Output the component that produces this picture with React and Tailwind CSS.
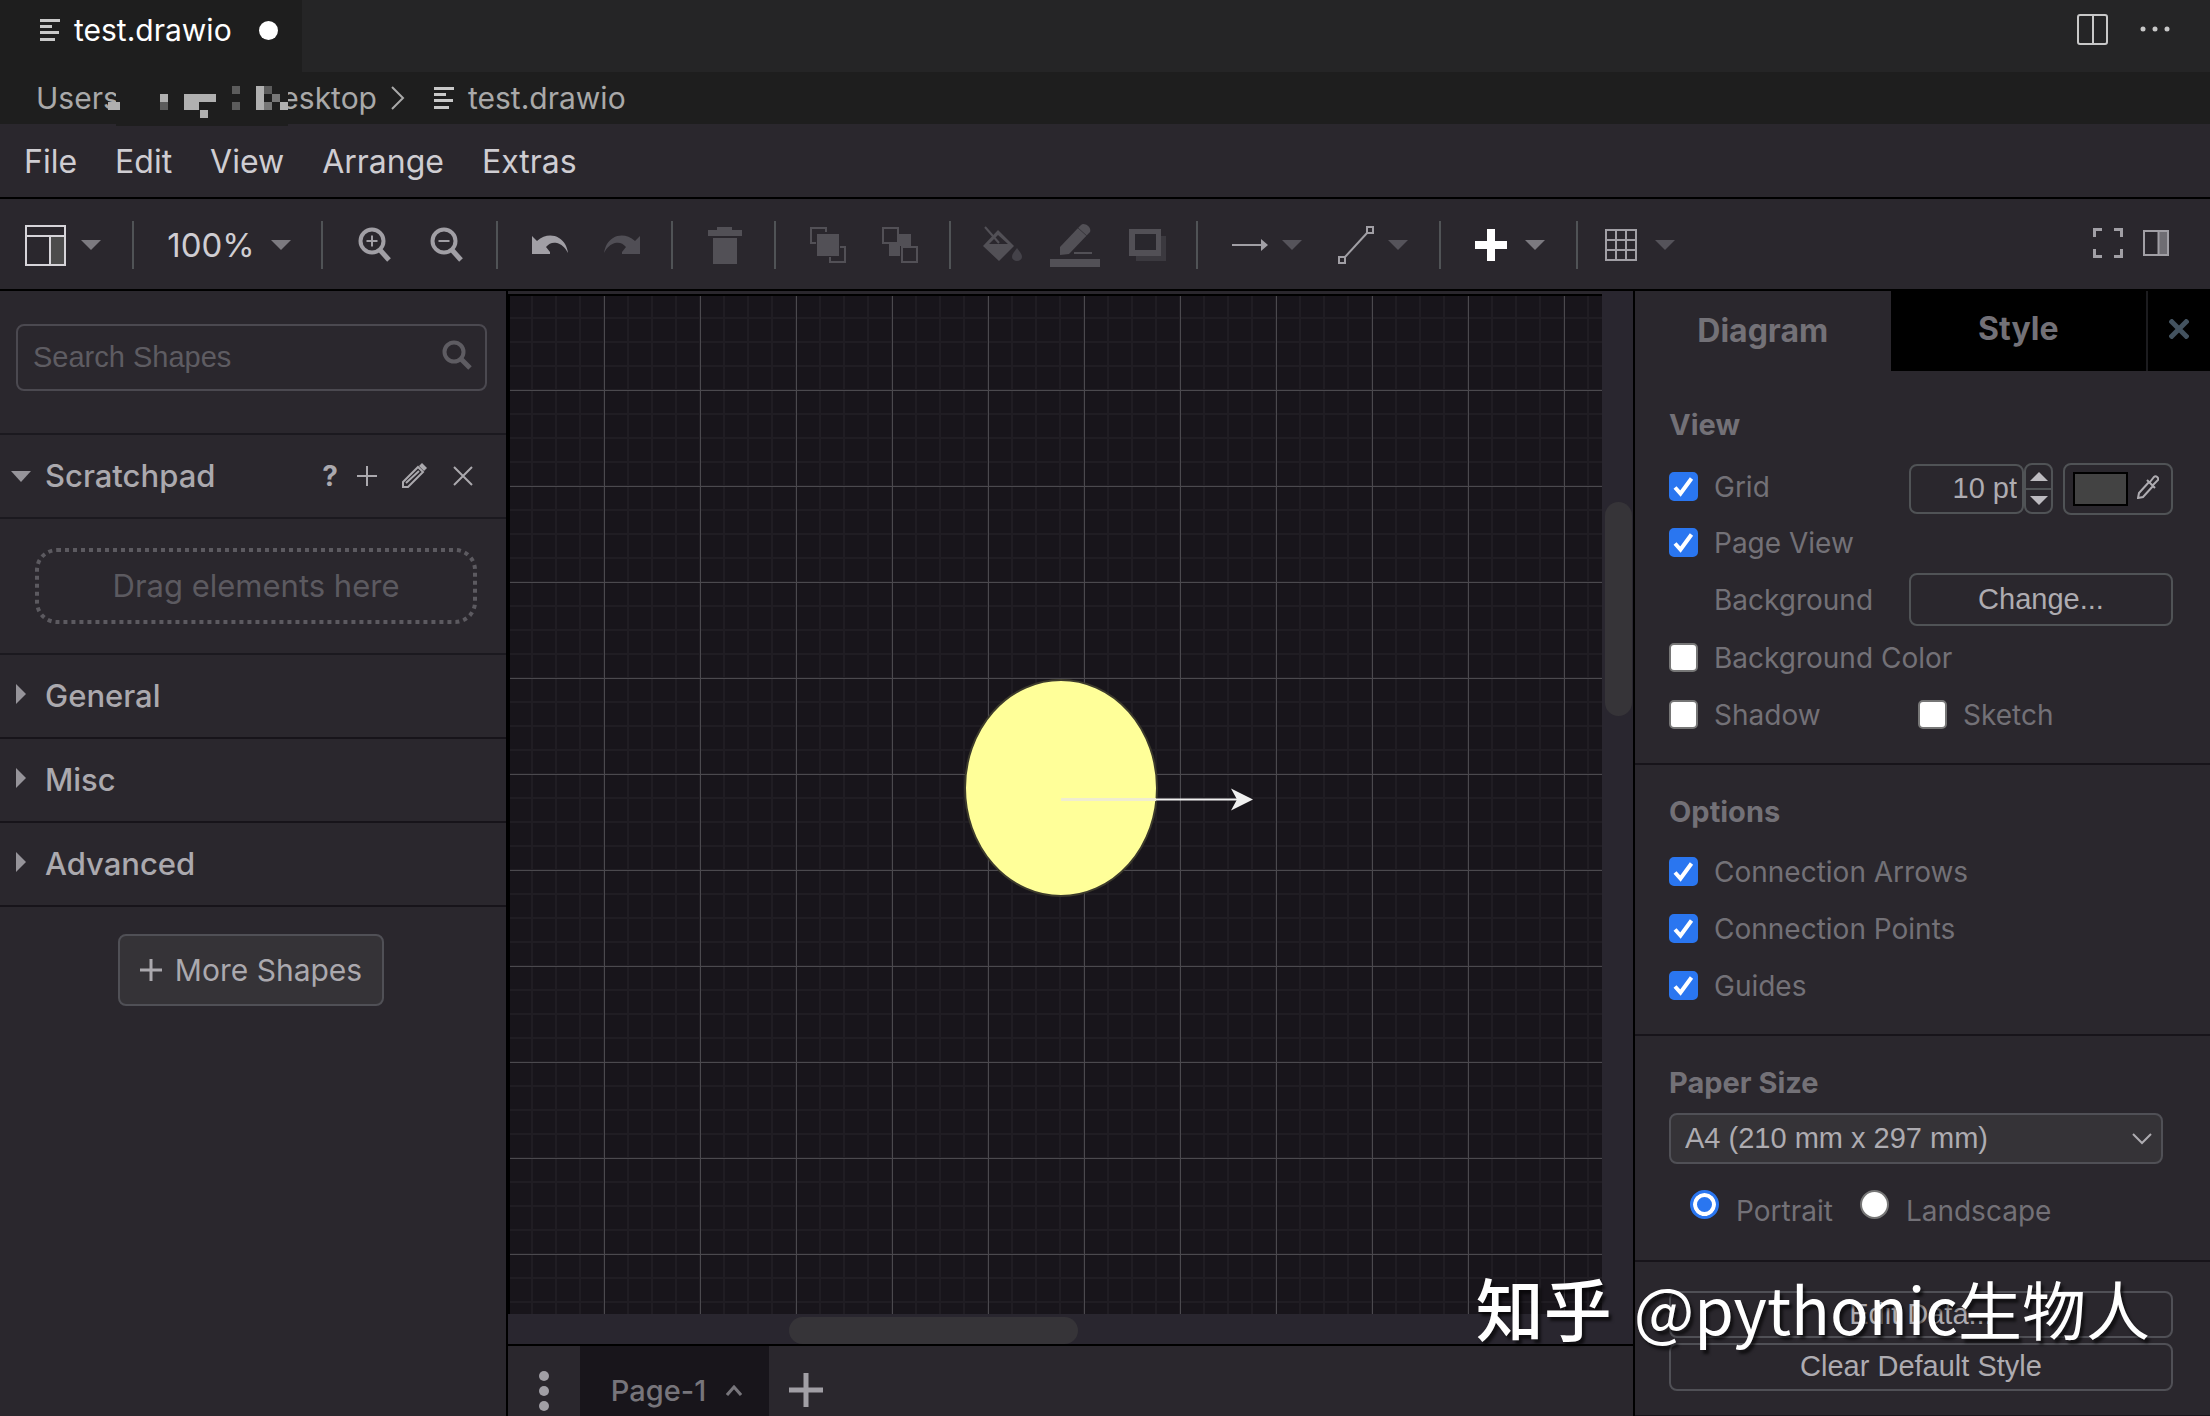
import React, { useState } from 'react'

const FileLines = ({ className = '' }) => (
  <svg width="20" height="22" viewBox="0 0 20 22" fill="currentColor" className={`shrink-0 ${className}`}>
    <rect x="0" y="0" width="20" height="3" />
    <rect x="0" y="6" width="12" height="3" />
    <rect x="0" y="12" width="19" height="3" />
    <rect x="0" y="19" width="15" height="3" />
  </svg>
)

const Caret = ({ dim }) => (
  <svg width="20" height="10" viewBox="0 0 20 10" className={dim ? 'text-[#55535a]' : 'text-[#7c7a80]'}>
    <path d="M0 0h20L10 10z" fill="currentColor" />
  </svg>
)

const Separator = () => <div className="ml-[13px] mr-4 h-12 w-[2px] shrink-0 bg-[#505356]" />

const ToolButton = ({ label, children, wide }) => (
  <button
    type="button"
    aria-label={label}
    className={`flex h-full shrink-0 items-center justify-center gap-[14px] ${wide ? 'w-[106px]' : 'w-[72px]'}`}
  >
    {children}
  </button>
)

const Check = ({ id, label, defaultChecked }) => (
  <div className="flex items-center gap-4">
    <span className="relative block size-[29px]">
      <input
        id={id}
        type="checkbox"
        defaultChecked={defaultChecked}
        className="peer block size-[29px] appearance-none rounded-[5px] border-2 border-[#767676] bg-white checked:border-[#2a76f0] checked:bg-[#2a76f0]"
      />
      <svg
        viewBox="0 0 29 29"
        className="pointer-events-none absolute inset-0 hidden size-[29px] text-white peer-checked:block"
      >
        <path d="M6 15.500l5.500 6L22.500 6.500" fill="none" stroke="currentColor" strokeWidth="4" />
      </svg>
    </span>
    <label htmlFor={id}>{label}</label>
  </div>
)

const Radio = ({ id, label, defaultChecked }) => (
  <div className="flex items-start gap-[17px]">
    <input
      id={id}
      type="radio"
      name="orientation"
      defaultChecked={defaultChecked}
      className="size-[29px] appearance-none rounded-full border-2 border-[#767676] bg-white checked:border-[3px] checked:border-[#2a76f0] checked:bg-[#2a76f0] checked:shadow-[inset_0_0_0_4px_#ffffff]"
    />
    <label htmlFor={id} className="mt-1 leading-[34px]">
      {label}
    </label>
  </div>
)

const Heading = ({ children }) => (
  <h2 className="h-10 text-[29px] font-bold leading-10 text-[#737177]">{children}</h2>
)

const TabBar = () => (
  <header className="flex h-[72px] shrink-0 bg-[#252526]">
    <div className="flex w-[302px] items-center bg-[#1e1e1e] pb-3 pl-10">
      <FileLines className="text-[#c8c8c8]" />
      <span className="ml-[14px] text-[30px] text-white">test.drawio</span>
      <span className="ml-[27px] size-[19px] rounded-full bg-white" />
    </div>
    <div className="ml-auto flex items-center gap-8 pb-[14px] pr-10 text-[#c8c8c8]">
      <button type="button" aria-label="Split editor">
        <svg width="31" height="31" viewBox="0 0 31 31" fill="none" stroke="currentColor" strokeWidth="2">
          <rect x="1" y="1" width="29" height="29" rx="2" />
          <path d="M16 1v29" />
        </svg>
      </button>
      <button type="button" aria-label="More actions">
        <svg width="30" height="6" viewBox="0 0 30 6" fill="currentColor">
          <circle cx="3" cy="3" r="2.500" />
          <circle cx="15" cy="3" r="2.500" />
          <circle cx="27" cy="3" r="2.500" />
        </svg>
      </button>
    </div>
  </header>
)

const Breadcrumb = () => (
  <nav className="relative flex h-[52px] shrink-0 items-center bg-[#1e1e1e] pl-9 text-[30px] text-[#a9a9a9]">
    <div className="flex w-[341px] justify-between">
      <a href="#users">Users</a>
      <a href="#desktop">Desktop</a>
    </div>
    <svg width="14" height="24" viewBox="0 0 14 24" fill="none" stroke="currentColor" strokeWidth="2" className="ml-[14px]">
      <path d="M1 1l11 11L1 23" />
    </svg>
    <FileLines className="ml-[29px] text-[#c8c8c8]" />
    <a href="#file" className="ml-[14px]">
      test.drawio
    </a>
    {/* redacted folder names */}
    <svg width="180" height="56" viewBox="108 72 180 56" className="absolute left-[108px] top-0 z-10">
      <path d="M116 72h172v54H116z" fill="#1e1e1e" />
      <path d="M108 102h12v12h-12z" fill="#1e1e1e" />
      <path d="M108 102h12v8h-12zM160 94h8v8h-8zM184 94h32v8h-17v8h-15zM200 110h8v8h-8zM256 86h8v24h-8zM280 102h8v8h-8z" fill="#b0b0b0" />
      <path d="M160 102h8v8h-8zM232 86h8v8h-8zM232 102h8v8h-8zM264 86h8v8h-8z" fill="#5c5c5c" />
      <path d="M264 102h8v8h-8zM272 94h8v8h-8z" fill="#777777" />
    </svg>
  </nav>
)

const MenuBar = () => (
  <nav className="flex h-[75px] shrink-0 items-center gap-[38px] border-b-2 border-black pl-6 pt-[3px] text-[32px] text-[#cfcdd2]">
    {['File', 'Edit', 'View', 'Arrange', 'Extras'].map((item) => (
      <button key={item} type="button">
        {item}
      </button>
    ))}
  </nav>
)

const Toolbar = () => (
  <div className="flex h-[92px] shrink-0 items-center border-b-2 border-black pl-[7px] pt-[2px] text-[#a19fa5]">
    <button type="button" aria-label="View" className="flex h-full w-28 items-center justify-center gap-[15px]">
      <svg width="41" height="41" viewBox="0 0 41 41" fill="none" stroke="#d6d4d9" strokeWidth="2">
        <rect x="26" y="12" width="13" height="28" fill="#4c4c4c" stroke="none" />
        <rect x="1" y="1" width="39" height="39" />
        <path d="M1 11h39M25 11v29" />
      </svg>
      <Caret />
    </button>
    <Separator />
    <button type="button" className="flex h-full w-[158px] items-center justify-center gap-4 text-[33px] text-[#cfcdd2]">
      <span className="pt-[2px]">100%</span>
      <Caret />
    </button>
    <Separator />
    <ToolButton label="Zoom in">
      <svg width="34" height="36" viewBox="0 0 34 36" fill="none" stroke="currentColor">
        <circle cx="14" cy="14" r="11.500" strokeWidth="4" />
        <path d="M22 23l9 10" strokeWidth="5" />
        <path d="M8.500 14h11M14 8.500v11" strokeWidth="2" />
      </svg>
    </ToolButton>
    <ToolButton label="Zoom out">
      <svg width="34" height="36" viewBox="0 0 34 36" fill="none" stroke="currentColor">
        <circle cx="14" cy="14" r="11.500" strokeWidth="4" />
        <path d="M22 23l9 10" strokeWidth="5" />
        <path d="M8.500 14h11" strokeWidth="2" />
      </svg>
    </ToolButton>
    <Separator />
    <ToolButton label="Undo">
      <svg width="36" height="20" viewBox="0 0 36 20" fill="currentColor">
        <path d="M0 1l5 5C12 0 20-1 27 3c5 3 8 8 9 15-3-6-7-9-11-10-4-1-8 0-11 4l4 5v2H0z" />
      </svg>
    </ToolButton>
    <ToolButton label="Redo">
      <svg width="36" height="20" viewBox="0 0 36 20" fill="#504e55">
        <path d="M36 1l-5 5C24 0 16-1 9 3 4 6 1 11 0 18c3-6 7-9 11-10 4-1 8 0 11 4l-4 5v2h18z" />
      </svg>
    </ToolButton>
    <Separator />
    <ToolButton label="Delete">
      <svg width="34" height="38" viewBox="0 0 34 38" fill="#525056">
        <path d="M0 4h9V1h15v3h10v6H0zM5 12h24v26H5z" />
      </svg>
    </ToolButton>
    <Separator />
    <ToolButton label="To front">
      <svg width="36" height="36" viewBox="0 0 36 36" fill="none" stroke="#525056" strokeWidth="2">
        <path d="M16 5V1H1v15h5M30 20h5v15H20v-5" />
        <rect x="7" y="7" width="22" height="22" fill="#525056" stroke="none" />
      </svg>
    </ToolButton>
    <ToolButton label="To back">
      <svg width="36" height="36" viewBox="0 0 36 36" fill="none" stroke="#525056" strokeWidth="2">
        <path d="M16 7h13v12H18v10H7V16h9z" fill="#525056" stroke="none" />
        <rect x="1" y="1" width="15" height="15" />
        <rect x="20" y="20" width="15" height="15" />
      </svg>
    </ToolButton>
    <Separator />
    <ToolButton label="Fill color">
      <svg width="40" height="38" viewBox="0 0 40 38" fill="#525056">
        <path d="M2 1l14 16" stroke="#525056" strokeWidth="2" />
        <path d="M15 4l16 16-15 15L0 20zM15 9L6 18h19z" fillRule="evenodd" />
        <path d="M34 22c3 4 5 6 5 9a5 4 0 0 1-10 0c0-3 2-5 5-9z" fill="#444249" />
      </svg>
    </ToolButton>
    <ToolButton label="Line color">
      <svg width="50" height="44" viewBox="0 0 50 44" fill="#525056">
        <path d="M10 24L29 4l2-2c3-3 11 2 9 7L19 31l-9 1z" />
        <path d="M28 5l9 8" stroke="#37353b" strokeWidth="1" />
        <rect x="24" y="29" width="18" height="2" />
        <rect x="0" y="36" width="50" height="8" />
      </svg>
    </ToolButton>
    <ToolButton label="Shadow">
      <svg width="37" height="34" viewBox="0 0 37 34">
        <rect x="7" y="8" width="30" height="25" fill="#3b393f" />
        <rect x="0" y="1" width="32" height="27" fill="#525056" />
        <rect x="6" y="6" width="21" height="16" fill="#29272d" />
      </svg>
    </ToolButton>
    <Separator />
    <ToolButton label="Connection" wide>
      <svg width="36" height="14" viewBox="0 0 36 14" fill="currentColor">
        <path d="M0 6h29V1l7 6-7 6V8H0z" />
      </svg>
      <Caret dim />
    </ToolButton>
    <ToolButton label="Waypoints" wide>
      <svg width="36" height="38" viewBox="0 0 36 38" fill="none" stroke="currentColor" strokeWidth="2">
        <rect x="1" y="31" width="6" height="6" />
        <rect x="29" y="1" width="6" height="6" />
        <path d="M7 31L29 7" />
      </svg>
      <Caret dim />
    </ToolButton>
    <Separator />
    <ToolButton label="Insert" wide>
      <svg width="36" height="34" viewBox="0 0 36 34" fill="#ffffff">
        <path d="M12 1h8v12h12v8H20v12h-8V21H0v-8h12z" />
      </svg>
      <Caret />
    </ToolButton>
    <Separator />
    <button type="button" aria-label="Table" className="flex h-full w-[92px] items-center justify-center gap-[18px]">
      <svg width="32" height="32" viewBox="0 0 32 32" fill="none" stroke="currentColor" strokeWidth="2">
        <path d="M1 1h30v30H1zM11 1v30M21 1v30M1 11h30M1 21h30" />
      </svg>
      <Caret dim />
    </button>
    <div className="ml-auto flex items-center gap-5 pb-1 pr-[41px]">
      <button type="button" aria-label="Fullscreen">
        <svg width="30" height="30" viewBox="0 0 30 30" fill="none" stroke="currentColor" strokeWidth="3">
          <path d="M1.500 9V1.500H9M21 1.500h7.500V9M28.500 21v7.500H21M9 28.500H1.500V21" />
        </svg>
      </button>
      <button type="button" aria-label="Format panel">
        <svg width="26" height="26" viewBox="0 0 26 26" fill="none" stroke="currentColor" strokeWidth="2">
          <rect x="15" y="1" width="9" height="24" fill="#6f6d73" stroke="none" />
          <rect x="1" y="1" width="24" height="24" />
          <path d="M15.500 1v24" />
        </svg>
      </button>
    </div>
  </div>
)

const Sidebar = () => (
  <aside className="w-[508px] shrink-0 border-r-2 border-black">
    <div className="h-36 border-b-2 border-[#1b191f] px-4 pt-[33px]">
      <div className="relative mr-[3px]">
        <input
          type="text"
          aria-label="Search Shapes"
          placeholder="Search Shapes"
          className="block h-[67px] w-full rounded-lg border-2 border-[#4b4950] bg-transparent pl-[15px] pr-14 font-['Liberation_Sans',Arial,sans-serif] text-[29px] text-[#cfcdd2] placeholder:text-[#5e5c62]"
        />
        <svg width="30" height="30" viewBox="0 0 30 30" fill="none" stroke="#5e5c62" className="absolute right-[15px] top-4">
          <circle cx="12" cy="12" r="9.500" strokeWidth="4" />
          <path d="M19 19l9 9" strokeWidth="5" />
        </svg>
      </div>
    </div>

    <div className="flex h-[84px] items-center border-b-2 border-[#1b191f] pl-[11px] text-[#aba9ae]">
      <svg width="20" height="11" viewBox="0 0 20 11" className="shrink-0">
        <path d="M0 0h20L10 11z" fill="#96949a" />
      </svg>
      <span className="ml-[14px] text-[31px] font-medium">Scratchpad</span>
      <div className="ml-auto flex items-center pr-[33px]">
        <button type="button" className="text-[28px] font-bold">
          ?
        </button>
        <button type="button" aria-label="Add" className="ml-[19px]">
          <svg width="20" height="20" viewBox="0 0 20 20" stroke="currentColor" strokeWidth="2">
            <path d="M0 10h20M10 0v20" />
          </svg>
        </button>
        <button type="button" aria-label="Edit" className="ml-[24px]">
          <svg width="26" height="26" viewBox="0 0 26 26" fill="none" stroke="currentColor" strokeWidth="2">
            <path d="M2 19L17 4l5 5L7 24H2zM5 20L18 8" />
            <path d="M18 3l3-3 5 5-3 3z" fill="currentColor" stroke="none" />
          </svg>
        </button>
        <button type="button" aria-label="Close" className="ml-[26px]">
          <svg width="20" height="20" viewBox="0 0 20 20" stroke="currentColor" strokeWidth="2">
            <path d="M1 1l18 18M19 1L1 19" />
          </svg>
        </button>
      </div>
    </div>
    <div className="h-[136px] border-b-2 border-[#1b191f] pl-[35px] pr-[29px] pt-[29px]">
      <div className="relative flex h-[76px] items-center justify-center text-[31px] text-[#5c5a60]">
        <svg width="100%" height="76" className="absolute inset-0" fill="none">
          <rect x="2" y="2" width="438" height="72" rx="20" stroke="#5c5a60" strokeWidth="4" strokeDasharray="4 4" />
        </svg>
        Drag elements here
      </div>
    </div>

    {['General', 'Misc', 'Advanced'].map((name) => (
      <button
        key={name}
        type="button"
        className="flex h-[84px] w-full items-center border-b-2 border-[#17141a] pl-4 text-[31px] font-medium text-[#aba9ae]"
      >
        <svg width="10" height="20" viewBox="0 0 10 20" className="mb-1 mr-[19px]">
          <path d="M0 0l10 10L0 20z" fill="#96949a" />
        </svg>
        {name}
      </button>
    ))}

    <div className="flex justify-center pr-1 pt-[27px]">
      <button
        type="button"
        className="flex h-[72px] items-center gap-[13px] rounded-lg border-2 border-[#505056] bg-[#353337] px-5 text-[30px] text-[#aba9ae]"
      >
        <svg width="22" height="22" viewBox="0 0 22 22" stroke="currentColor" strokeWidth="3">
          <path d="M0 11h22M11 0v22" />
        </svg>
        More Shapes
      </button>
    </div>
  </aside>
)

const Canvas = () => (
  <main className="flex min-w-0 flex-1 flex-col">
    <div className="flex min-h-0 flex-1">
      <div className="mt-[3px] min-w-0 flex-1 border-l-2 border-t-2 border-black bg-[#18151b]">
        <svg width="100%" height="100%" className="block">
          <defs>
            <pattern id="minor" x="93" y="93" width="24" height="24" patternUnits="userSpaceOnUse">
              <path d="M0 1h24M1 0v24" stroke="#201d23" strokeWidth="2" />
            </pattern>
            <pattern id="major" x="94" y="94" width="96" height="96" patternUnits="userSpaceOnUse">
              <rect width="96" height="1" fill="#4b494e" />
              <rect width="1" height="96" fill="#4b494e" />
            </pattern>
          </defs>
          <rect width="100%" height="100%" fill="url(#minor)" />
          <rect width="100%" height="100%" fill="url(#major)" />
          <ellipse cx="551" cy="492" rx="96" ry="108" fill="#ffff99" stroke="#3c3a2c" strokeWidth="2" />
          <path d="M551 503.500h95" stroke="#f0edd0" strokeWidth="3" />
          <path d="M646 503.500h84" stroke="#f0f0f0" strokeWidth="2" />
          <path d="M743 503.500l-22 11 6-11-6-11z" fill="#f0f0f0" />
        </svg>
      </div>
      <div className="w-[31px] shrink-0 bg-[#29262f] pl-[3px] pr-[1px] pt-[211px]">
        <div className="h-[214px] rounded-full bg-[#363438]" />
      </div>
    </div>
    <div className="h-[30px] shrink-0 bg-[#29262f] pl-[281px] pt-[3px]">
      <div className="h-[27px] w-[289px] rounded-full bg-[#363438]" />
    </div>
    <footer className="flex h-[72px] shrink-0 items-stretch border-t-2 border-black text-[#a19fa5]">
      <button type="button" aria-label="Pages" className="flex w-[72px] items-center justify-center pt-5">
        <svg width="10" height="40" viewBox="0 0 10 40" fill="currentColor">
          <circle cx="5" cy="5" r="5" />
          <circle cx="5" cy="20" r="5" />
          <circle cx="5" cy="35" r="5" />
        </svg>
      </button>
      <button
        type="button"
        className="flex w-[189px] items-center justify-center gap-5 bg-[#18151b] pl-1 pt-5 text-[29px] font-medium text-[#77757b]"
      >
        Page-1
        <svg width="16" height="12" viewBox="0 0 16 12" fill="none" stroke="currentColor" strokeWidth="3">
          <path d="M1 10l7-8 7 8" />
        </svg>
      </button>
      <button type="button" aria-label="Insert page" className="ml-5 pt-[18px]">
        <svg width="34" height="34" viewBox="0 0 34 34" stroke="currentColor" strokeWidth="5">
          <path d="M0 17h34M17 0v34" />
        </svg>
      </button>
    </footer>
  </main>
)

const FormatPanel = () => {
  const [gridSize, setGridSize] = useState('10 pt')

  return (
    <aside className="w-[577px] shrink-0 border-l-2 border-black text-[28px] text-[#737177]">
      <div className="flex h-20 text-[32px] font-bold">
        <button type="button" className="flex-1">
          Diagram
        </button>
        <button type="button" className="flex-1 border-r-2 border-[#1c1c1f] bg-black pb-1">
          Style
        </button>
        <button type="button" aria-label="Close panel" className="flex w-[62px] items-center justify-center bg-black pb-1">
          <svg width="20" height="20" viewBox="0 0 20 20" stroke="#43525f" strokeWidth="5">
            <path d="M1 1l18 18M19 1L1 19" />
          </svg>
        </button>
      </div>

      <section className="border-b-2 border-[#17141a] pb-5 pl-[34px] pr-[37px] pt-[34px]">
        <Heading>View</Heading>
        <div className="mt-[13px] flex h-[57px] items-center">
          <Check id="grid" label="Grid" defaultChecked />
          <div className="ml-auto flex items-center pt-1 font-['Liberation_Sans',Arial,sans-serif] text-[29px]">
            <input
              type="text"
              aria-label="Grid size"
              value={gridSize}
              onChange={(e) => setGridSize(e.target.value)}
              className="h-[50px] w-[115px] rounded-lg border-2 border-[#505356] bg-transparent pr-[5px] text-right text-[#aeacb1]"
            />
            <div className="flex h-[51px] w-[29px] flex-col divide-y-2 divide-[#505356] rounded-lg border-2 border-[#505356]">
              <button type="button" aria-label="Increase" className="flex flex-1 items-center justify-center">
                <svg width="18" height="9" viewBox="0 0 18 9">
                  <path d="M0 9h18L9 0z" fill="#bdbbc0" />
                </svg>
              </button>
              <button type="button" aria-label="Decrease" className="flex flex-1 items-center justify-center">
                <svg width="18" height="9" viewBox="0 0 18 9">
                  <path d="M0 0h18L9 9z" fill="#bdbbc0" />
                </svg>
              </button>
            </div>
            <button
              type="button"
              aria-label="Grid color"
              className="ml-[10px] flex h-[52px] w-[110px] items-center gap-[9px] rounded-lg border-2 border-[#505356] pl-2"
            >
              <span className="h-[34px] w-[55px] border-2 border-black bg-[#434343]" />
              <svg width="22" height="24" viewBox="0 0 22 24" fill="none" stroke="#aeacb1" strokeWidth="2" className="mb-1">
                <path d="M12 7L2 18l-1 5 5-1L16 11M10 5l8 8M13 7l4-5c2-2 5 1 4 3l-5 5" />
              </svg>
            </button>
          </div>
        </div>
        <div className="flex h-[57px] items-center pb-[2px]">
          <Check id="page-view" label="Page View" defaultChecked />
        </div>
        <div className="flex h-[57px] items-center justify-between pb-[2px] pl-[45px]">
          <span>Background</span>
          <button
            type="button"
            className="h-[53px] w-[264px] rounded-lg border-2 border-[#505356] font-['Liberation_Sans',Arial,sans-serif] text-[29px] text-[#aeacb1]"
          >
            Change...
          </button>
        </div>
        <div className="flex h-[57px] items-center">
          <Check id="background-color" label="Background Color" />
        </div>
        <div className="grid h-[57px] grid-cols-[249px_1fr] items-center">
          <Check id="shadow" label="Shadow" />
          <Check id="sketch" label="Sketch" />
        </div>
      </section>

      <section className="border-b-2 border-[#17141a] pb-5 pl-[34px] pr-[37px] pt-[27px]">
        <Heading>Options</Heading>
        <div className="mt-[11px] flex h-[57px] items-center">
          <Check id="arrows" label="Connection Arrows" defaultChecked />
        </div>
        <div className="flex h-[57px] items-center">
          <Check id="points" label="Connection Points" defaultChecked />
        </div>
        <div className="flex h-[57px] items-center">
          <Check id="guides" label="Guides" defaultChecked />
        </div>
      </section>

      <section className="border-b-2 border-[#17141a] pb-[27px] pl-[34px] pr-[47px] pt-[27px]">
        <Heading>Paper Size</Heading>
        <div className="relative mt-[10px]">
          <select
            aria-label="Paper Size"
            className="block h-[51px] w-full appearance-none rounded-lg border-2 border-[#505056] bg-[#353337] pl-[14px] font-['Liberation_Sans',Arial,sans-serif] text-[29px] text-[#aeacb1]"
          >
            <option>A4 (210 mm x 297 mm)</option>
          </select>
          <svg width="20" height="12" viewBox="0 0 20 12" fill="none" stroke="#aeacb1" strokeWidth="2" className="pointer-events-none absolute right-[11px] top-5">
            <path d="M1 1l9 9 9-9" />
          </svg>
        </div>
        <div className="mt-3 flex h-[57px] gap-[27px] pl-[21px] pt-[14px]">
          <Radio id="portrait" label="Portrait" defaultChecked />
          <Radio id="landscape" label="Landscape" />
        </div>
      </section>

      <section className="flex flex-col gap-[5px] border-b-2 border-[#17141a] pb-6 pl-[34px] pr-[37px] pt-[29px] font-['Liberation_Sans',Arial,sans-serif] text-[29px] text-[#aeacb1]">
        <button type="button" className="h-[47px] rounded-lg border-2 border-[#505056]">
          Edit Data...
        </button>
        <button type="button" className="h-12 rounded-lg border-2 border-[#505056]">
          Clear Default Style
        </button>
      </section>
    </aside>
  )
}

const App = () => {
  return (
    <div className="relative flex h-screen flex-col overflow-hidden bg-[#2a272d] font-['Inter',sans-serif]">
      <TabBar />
      <Breadcrumb />
      <MenuBar />
      <Toolbar />
      <div className="flex min-h-0 flex-1">
        <Sidebar />
        <Canvas />
        <FormatPanel />
      </div>

      {/* Watermark */}
      <p className="pointer-events-none absolute bottom-[61px] right-[60px] flex items-center gap-[22px] whitespace-nowrap font-['Noto_Sans_CJK_SC',sans-serif] text-[64px] leading-[96px] text-white [text-shadow:3px_4px_3px_rgba(0,0,0,0.6)]">
        <span className="text-[68px] font-medium">知乎</span>
        <span>@pythonic生物人</span>
      </p>
    </div>
  )
}

export default App
